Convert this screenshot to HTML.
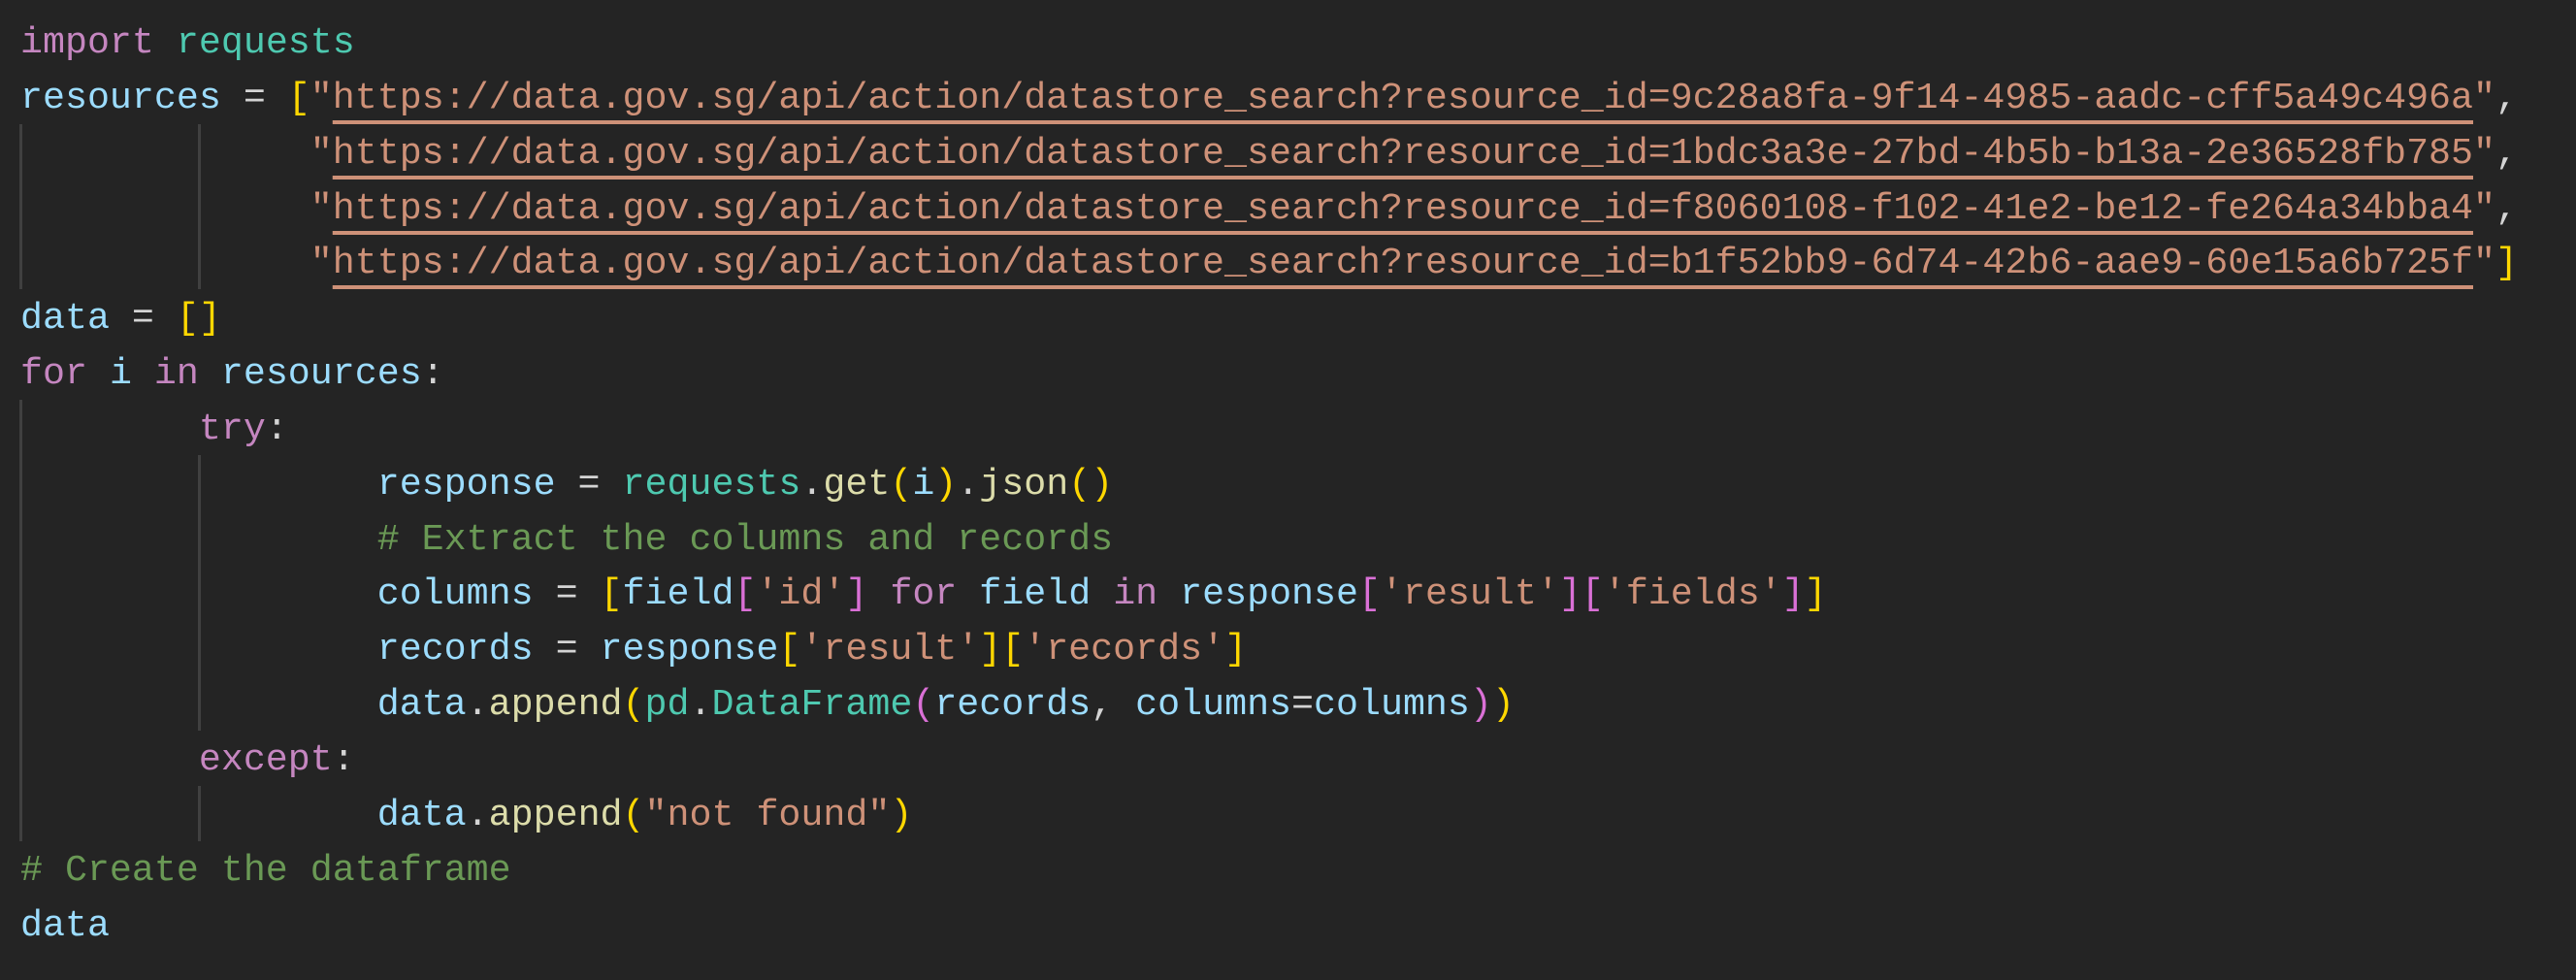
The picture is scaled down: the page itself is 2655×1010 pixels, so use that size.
<!DOCTYPE html>
<html><head><meta charset="utf-8"><style>
html,body{margin:0;padding:0;background:#242424;width:2655px;height:1010px;overflow:hidden}
#c{position:absolute;left:21px;top:16px;font-family:"Liberation Mono",monospace;font-size:38.3px;line-height:56.85px;white-space:pre;color:#d4d4d4}
.k{color:#c586c0}.m{color:#4ec9b0}.v{color:#9cdcfe}.s{color:#ce9178}.f{color:#dcdcaa}.c{color:#6a9955}
.b1{color:#ffd700}.b2{color:#da70d6}
.u{text-decoration:underline;text-decoration-thickness:4px;text-underline-offset:13px;text-decoration-color:#ce9178}
.g{position:absolute;width:3px;background:#404040}
</style></head><body>
<div class="g" style="left:20px;top:128px;height:170px"></div>
<div class="g" style="left:204px;top:128px;height:170px"></div>
<div class="g" style="left:20px;top:412px;height:455px"></div>
<div class="g" style="left:204px;top:469px;height:284px"></div>
<div class="g" style="left:204px;top:810px;height:57px"></div>
<div id="c"><span class="k">import</span> <span class="m">requests</span>
<span class="v">resources</span> = <span class="b1">[</span><span class="s">"<span class="u">https://data.gov.sg/api/action/datastore_search?resource_id=9c28a8fa-9f14-4985-aadc-cff5a49c496a</span>"</span>,
             <span class="s">"<span class="u">https://data.gov.sg/api/action/datastore_search?resource_id=1bdc3a3e-27bd-4b5b-b13a-2e36528fb785</span>"</span>,
             <span class="s">"<span class="u">https://data.gov.sg/api/action/datastore_search?resource_id=f8060108-f102-41e2-be12-fe264a34bba4</span>"</span>,
             <span class="s">"<span class="u">https://data.gov.sg/api/action/datastore_search?resource_id=b1f52bb9-6d74-42b6-aae9-60e15a6b725f</span>"</span><span class="b1">]</span>
<span class="v">data</span> = <span class="b1">[]</span>
<span class="k">for</span> <span class="v">i</span> <span class="k">in</span> <span class="v">resources</span>:
        <span class="k">try</span>:
                <span class="v">response</span> = <span class="m">requests</span>.<span class="f">get</span><span class="b1">(</span><span class="v">i</span><span class="b1">)</span>.<span class="f">json</span><span class="b1">()</span>
                <span class="c"># Extract the columns and records</span>
                <span class="v">columns</span> = <span class="b1">[</span><span class="v">field</span><span class="b2">[</span><span class="s">'id'</span><span class="b2">]</span> <span class="k">for</span> <span class="v">field</span> <span class="k">in</span> <span class="v">response</span><span class="b2">[</span><span class="s">'result'</span><span class="b2">][</span><span class="s">'fields'</span><span class="b2">]</span><span class="b1">]</span>
                <span class="v">records</span> = <span class="v">response</span><span class="b1">[</span><span class="s">'result'</span><span class="b1">][</span><span class="s">'records'</span><span class="b1">]</span>
                <span class="v">data</span>.<span class="f">append</span><span class="b1">(</span><span class="m">pd</span>.<span class="m">DataFrame</span><span class="b2">(</span><span class="v">records</span>, <span class="v">columns</span>=<span class="v">columns</span><span class="b2">)</span><span class="b1">)</span>
        <span class="k">except</span>:
                <span class="v">data</span>.<span class="f">append</span><span class="b1">(</span><span class="s">"not found"</span><span class="b1">)</span>
<span class="c"># Create the dataframe</span>
<span class="v">data</span></div>
</body></html>
